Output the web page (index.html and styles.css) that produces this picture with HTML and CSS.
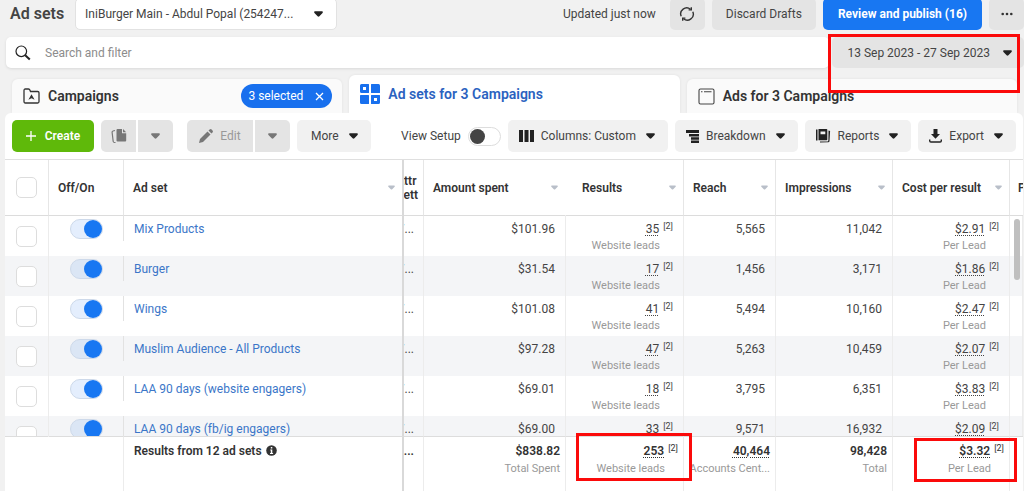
FILE: index.html
```html
<!DOCTYPE html>
<html lang="en">
<head>
<meta charset="utf-8">
<meta name="viewport" content="width=device-width, initial-scale=1">
<title>Ad sets</title>
<link rel="stylesheet" href="styles.css">
</head>
<body>
<svg class="symbols" aria-hidden="true">
  <symbol id="caret" viewBox="0 0 10 6"><path d="M1.3 0h7.4c1 0 1.5 1 .8 1.800L6 5.500c-.6.7-1.400.7-2 0L.5 1.800C-.2 1 .3 0 1.300 0z"/></symbol>
</svg>

<header class="topbar">
  <h1 class="title">Ad sets</h1>
  <div class="account">
    <select class="account-select" aria-label="Ad account"><option>IniBurger Main - Abdul Popal (254247...</option></select>
    <svg class="caret"><use href="#caret"/></svg>
  </div>
  <span class="updated">Updated just now</span>
  <button class="btn dark square" aria-label="Refresh">
    <svg width="16" height="16" viewBox="0 0 16 16" fill="none" stroke="#333" stroke-width="1.400"><path d="M2.200 10.200A6 6 0 0 1 11.500 3.200M13.800 5.800A6 6 0 0 1 4.500 12.800"/><path d="M12.300 1.200v2.700H9.600M3.700 14.800v-2.700h2.700"/></svg>
  </button>
  <button class="btn dark discard">Discard Drafts</button>
  <button class="btn primary">Review and publish (16)</button>
  <button class="btn dark square" aria-label="More options">
    <svg width="12" height="4" viewBox="0 0 12 4" fill="#333"><circle cx="1.700" cy="2" r="1.300"/><circle cx="6" cy="2" r="1.300"/><circle cx="10.300" cy="2" r="1.300"/></svg>
  </button>
</header>

<div class="filters">
  <label class="search">
    <svg width="16" height="16" viewBox="0 0 16 16" fill="none" stroke="#222"><circle cx="6.300" cy="6.300" r="5.300" stroke-width="1.200"/><path d="M10.200 10.200l4.600 4.300" stroke-width="2"/></svg>
    <input class="search-input" type="text" placeholder="Search and filter" aria-label="Search and filter">
  </label>
  <button class="btn dark date">13 Sep 2023 - 27 Sep 2023<svg class="caret"><use href="#caret"/></svg></button>
</div>

<nav class="tabs">
  <div class="tab">
    <svg width="17" height="16" viewBox="0 0 17 16" fill="none" stroke="#333" stroke-width="1.300"><path d="M1 13.500v-11C1 1.500 1.500 1 2.300 1h3.200c.8 0 1.200.4 1.500 1.200l.5 1.300h7.200c.9 0 1.300.5 1.300 1.300v8.700c0 .9-.4 1.500-1.300 1.500H2.300C1.500 15 1 14.400 1 13.500z"/><path d="M8.500 6.300l3.100 5.500-3.100-1.500-3.100 1.500z" fill="#333" stroke="none"/></svg>
    <a class="tab-link" href="#campaigns">Campaigns</a>
    <button class="pill" aria-label="3 selected, clear">3 selected
      <svg width="9" height="9" viewBox="0 0 9 9" stroke="#fff" stroke-width="1.300"><path d="M1 1l7 7M8 1L1 8"/></svg>
    </button>
  </div>
  <div class="tab active">
    <svg width="20" height="20" viewBox="0 0 20 20" fill="#1870ee"><path fill-rule="evenodd" d="M1.500 0H8.500Q9 0 9 .5V8.500Q9 9 8.500 9H1.500Q0 9 0 7.500V1.500Q0 0 1.500 0zM3 3V6H6V3z"/><path d="M11.500 0H18.500Q20 0 20 1.500V8.500Q20 9 19.500 9H11.500Q11 9 11 8.500V.5Q11 0 11.500 0z"/><path d="M.5 11H8.500Q9 11 9 11.500V19.500Q9 20 8.500 20H1.500Q0 20 0 18.500V11.500Q0 11 .5 11z"/><path fill-rule="evenodd" d="M11.500 11H19.500Q20 11 20 11.500V18.500Q20 20 18.500 20H11.500Q11 20 11 19.500V11.500Q11 11 11.500 11zM14 14V17H17V14z"/></svg>
    <a class="tab-link" href="#adsets" aria-current="page">Ad sets for 3 Campaigns</a>
  </div>
  <div class="tab">
    <svg width="17" height="17" viewBox="0 0 17 17" fill="none" stroke="#444" stroke-width="1.100"><rect x="1" y="1" width="15" height="15" rx="1.500"/><path d="M3 3.700h1.500M6 3.700h7.500"/></svg>
    <a class="tab-link" href="#ads">Ads for 3 Campaigns</a>
  </div>
</nav>

<main class="panel">
  <div class="toolbar">
    <button class="btn create"><svg width="10" height="10" viewBox="0 0 10 10" stroke="#fff" stroke-width="1.300"><path d="M5 0v10M0 5h10"/></svg>Create</button>
    <div class="split">
      <button class="btn off first" aria-label="Duplicate" disabled><svg width="16" height="15" viewBox="0 0 16 15" fill="#777"><path d="M6.500 0H11v4.200h4.200V11.500q0 1-1 1H6.500q-1 0-1-1V1q0-1 1-1z"/><path d="M12 0l3.200 3.300H12z"/><path d="M4 1.500L2 2Q1 2.300 1.100 3.300L2.200 12.500Q2.400 13.500 3.500 13.500H4.500" fill="none" stroke="#777" stroke-width="1.200"/></svg></button>
      <button class="btn off last" aria-label="Duplicate options" disabled><svg class="caret"><use href="#caret"/></svg></button>
    </div>
    <div class="split edit-group">
      <button class="btn off first edit" disabled><svg width="14" height="14" viewBox="0 0 14 14" fill="#777"><path d="M0 14l1-4L8.500 2.500l3 3L4 13z"/><path d="M9.500 1.600L10.600.5q1-.9 2 0l.9.9q.9 1 0 2L12.400 4.500z"/></svg>Edit</button>
      <button class="btn off last" aria-label="Edit options" disabled><svg class="caret"><use href="#caret"/></svg></button>
    </div>
    <button class="btn light more">More<svg class="caret"><use href="#caret"/></svg></button>
    <label class="setup">View Setup<input class="switch small" type="checkbox" role="switch"></label>
    <button class="btn light"><svg width="15" height="12" viewBox="0 0 15 12" fill="#222"><path d="M0 0h4v12H0zM5.500 0h4v12h-4zM11 0h4v12h-4z"/></svg>Columns: Custom<svg class="caret"><use href="#caret"/></svg></button>
    <button class="btn light"><svg width="13" height="13" viewBox="0 0 13 13" fill="#222"><path d="M0 0h13v3H0zM3 4h10v2.400H3zM5 7.300h8v2.400H5zM5 10.600h8V13H5z"/></svg>Breakdown<svg class="caret"><use href="#caret"/></svg></button>
    <button class="btn light"><svg width="15" height="14" viewBox="0 0 15 14" fill="#222"><path d="M0 .5h1.500v11H0z"/><path fill-rule="evenodd" d="M2.500 0h8q.8 0 .8.800V10.500q0 .8-.8.800h-8zM4.500 2.500v2.800h4.800V2.500z"/><path d="M12.500 1.500l1.600.5-.6 10q0 1.300-1.300 1.300L4 13.500v-1h7.200q1.200 0 1.200-1.500z"/></svg>Reports<svg class="caret"><use href="#caret"/></svg></button>
    <button class="btn light"><svg width="13" height="14" viewBox="0 0 13 14" fill="#222"><path d="M4.500 0h4v5H11L6.500 9.700 2 5h2.500z"/><path d="M.7 10.500v1.300q0 1.200 1.200 1.200h9.200q1.200 0 1.200-1.200v-1.300" fill="none" stroke="#222" stroke-width="1.400"/></svg>Export<svg class="caret"><use href="#caret"/></svg></button>
  </div>

  <div class="grid">
    <table class="table">
      <colgroup><col class="c-check"><col class="c-switch"><col><col class="c-attr"><col class="c-amount"><col class="c-results"><col class="c-reach"><col class="c-impr"><col class="c-cost"><col class="c-next"></colgroup>
      <thead>
        <tr>
          <th class="check"><input class="box" type="checkbox" aria-label="Select all"></th>
          <th>Off/On</th>
          <th class="pin"><div class="head">Ad set<svg class="caret"><use href="#caret"/></svg></div></th>
          <th class="attr"><div class="clip">Attr<br>Sett</div></th>
          <th class="plain"><div class="head">Amount spent<svg class="caret"><use href="#caret"/></svg></div></th>
          <th class="results"><div class="head">Results<svg class="caret"><use href="#caret"/></svg></div></th>
          <th><div class="head">Reach<svg class="caret"><use href="#caret"/></svg></div></th>
          <th><div class="head">Impressions<svg class="caret"><use href="#caret"/></svg></div></th>
          <th><div class="head">Cost per result<svg class="caret"><use href="#caret"/></svg></div></th>
          <th class="next">P</th>
        </tr>
      </thead>
      <tbody>
        <tr>
          <td class="check"><input class="box" type="checkbox" aria-label="Select Mix Products"></td>
          <td class="toggle"><input class="switch" type="checkbox" role="switch" aria-label="Mix Products on" checked></td>
          <td class="pin"><a class="name" href="#1">Mix Products</a></td>
          <td class="attr"><div class="clip">7...</div></td>
          <td>$101.96</td>
          <td><span class="ref">35</span><sup>[2]</sup><small>Website leads</small></td>
          <td>5,565</td><td>11,042</td>
          <td><span class="ref">$2.91</span><sup>[2]</sup><small>Per Lead</small></td><td></td>
        </tr>
        <tr>
          <td class="check"><input class="box" type="checkbox" aria-label="Select Burger"></td>
          <td class="toggle"><input class="switch" type="checkbox" role="switch" aria-label="Burger on" checked></td>
          <td class="pin"><a class="name" href="#2">Burger</a></td>
          <td class="attr"><div class="clip">7...</div></td>
          <td>$31.54</td>
          <td><span class="ref">17</span><sup>[2]</sup><small>Website leads</small></td>
          <td>1,456</td><td>3,171</td>
          <td><span class="ref">$1.86</span><sup>[2]</sup><small>Per Lead</small></td><td></td>
        </tr>
        <tr>
          <td class="check"><input class="box" type="checkbox" aria-label="Select Wings"></td>
          <td class="toggle"><input class="switch" type="checkbox" role="switch" aria-label="Wings on" checked></td>
          <td class="pin"><a class="name" href="#3">Wings</a></td>
          <td class="attr"><div class="clip">7...</div></td>
          <td>$101.08</td>
          <td><span class="ref">41</span><sup>[2]</sup><small>Website leads</small></td>
          <td>5,494</td><td>10,160</td>
          <td><span class="ref">$2.47</span><sup>[2]</sup><small>Per Lead</small></td><td></td>
        </tr>
        <tr>
          <td class="check"><input class="box" type="checkbox" aria-label="Select Muslim Audience - All Products"></td>
          <td class="toggle"><input class="switch" type="checkbox" role="switch" aria-label="Muslim Audience - All Products on" checked></td>
          <td class="pin"><a class="name" href="#4">Muslim Audience - All Products</a></td>
          <td class="attr"><div class="clip">7...</div></td>
          <td>$97.28</td>
          <td><span class="ref">47</span><sup>[2]</sup><small>Website leads</small></td>
          <td>5,263</td><td>10,459</td>
          <td><span class="ref">$2.07</span><sup>[2]</sup><small>Per Lead</small></td><td></td>
        </tr>
        <tr>
          <td class="check"><input class="box" type="checkbox" aria-label="Select LAA 90 days (website engagers)"></td>
          <td class="toggle"><input class="switch" type="checkbox" role="switch" aria-label="LAA 90 days (website engagers) on" checked></td>
          <td class="pin"><a class="name" href="#5">LAA 90 days (website engagers)</a></td>
          <td class="attr"><div class="clip">7...</div></td>
          <td>$69.01</td>
          <td><span class="ref">18</span><sup>[2]</sup><small>Website leads</small></td>
          <td>3,795</td><td>6,351</td>
          <td><span class="ref">$3.83</span><sup>[2]</sup><small>Per Lead</small></td><td></td>
        </tr>
        <tr>
          <td class="check"><input class="box" type="checkbox" aria-label="Select LAA 90 days (fb/ig engagers)"></td>
          <td class="toggle"><input class="switch" type="checkbox" role="switch" aria-label="LAA 90 days (fb/ig engagers) on" checked></td>
          <td class="pin"><a class="name" href="#6">LAA 90 days (fb/ig engagers)</a></td>
          <td class="attr"><div class="clip">7...</div></td>
          <td>$69.00</td>
          <td><span class="ref">33</span><sup>[2]</sup></td>
          <td>9,571</td><td>16,932</td>
          <td><span class="ref">$2.09</span><sup>[2]</sup></td><td></td>
        </tr>
      </tbody>
      <tfoot>
        <tr>
          <td class="plain"></td>
          <td></td>
          <td class="pin">Results from 12 ad sets <svg class="info" width="11" height="11" viewBox="0 0 11 11"><circle cx="5.500" cy="5.500" r="5.300" fill="#333"/><path d="M4.300 4.500h2v3.500h.8v1H4v-1h.8V5.500h-.5zM4.800 2h1.500v1.500H4.800z" fill="#fff"/></svg></td>
          <td class="attr"><div class="clip">...</div></td>
          <td>$838.82<small>Total Spent</small></td>
          <td><span class="ref">253</span><sup>[2]</sup><small>Website leads</small></td>
          <td><span class="ref">40,464</span><small class="wide">Accounts Cent...</small></td>
          <td>98,428<small>Total</small></td>
          <td><span class="ref">$3.32</span><sup>[2]</sup><small>Per Lead</small></td>
          <td></td>
        </tr>
      </tfoot>
    </table>
    <div class="thumb"></div>
  </div>
</main>

<div class="mark mark-date"></div>
<div class="mark mark-results"></div>
<div class="mark mark-cost"></div>
</body>
</html>
```

FILE: styles.css
```css
* { box-sizing: border-box; }

body {
  margin: 0;
  height: 100vh;
  display: flex;
  flex-direction: column;
  position: relative;
  overflow: hidden;
  background: #f1f1f1;
  color: #444;
  font: 12px/16px Roboto, "Liberation Sans", sans-serif;
}

button, input, select { font: inherit; color: inherit; margin: 0; }
a { color: inherit; text-decoration: none; }
svg { flex: none; }
.symbols { display: none; }
.caret { width: 9px; height: 6px; fill: #222; }

.btn {
  height: 32px;
  border: 0;
  border-radius: 5px;
  padding: 0 12px;
  display: flex;
  align-items: center;
  justify-content: center;
  gap: 7px;
  white-space: nowrap;
}
.dark { background: #e4e4e4; }
.light { background: #f1f1f1; padding: 0 13px 0 11px; }
.more { padding-left: 14px; }
.light .caret { margin-left: 3px; }
.primary { background: #1877f2; color: #fff; font-weight: 700; padding: 0 15px; }
.square { width: 35px; padding: 0; }

.topbar {
  margin-top: -2px;
  padding-left: 10px;
  display: flex;
  align-items: center;
  gap: 7px;
}
.title { margin: 0 4px 0 0; font-size: 16px; font-weight: 600; color: #444; }
.account {
  display: flex;
  align-items: center;
  width: 262px;
  height: 32px;
  padding-right: 13px;
  background: #fff;
  border: 1px solid #e2e2e2;
  border-radius: 5px;
}
.account-select { flex: 1; min-width: 0; height: 30px; border: 0; padding: 0 9px; appearance: none; background: transparent; }
.updated { margin-left: auto; margin-right: 7px; }
.discard { padding: 0 14px; }

.filters { display: flex; gap: 3px; margin-top: 7px; padding-left: 6px; }
.search {
  flex: 1;
  display: flex;
  align-items: center;
  gap: 14px;
  height: 31px;
  padding: 0 9px;
  background: #fff;
  border-radius: 5px;
  box-shadow: 0 1px 3px rgba(0, 0, 0, .1);
}
.search-input { flex: 1; border: 0; padding: 0; background: transparent; outline: 0; }
.search-input::placeholder { color: #8c8c8c; opacity: 1; }
.date { height: 31px; gap: 13px; padding: 0 12px 0 15px; }

.tabs { display: flex; align-items: flex-end; gap: 7px; margin-top: 7px; padding: 0 7px 0 12px; }
.tab {
  flex: 1;
  height: 34px;
  display: flex;
  align-items: center;
  gap: 8px;
  padding: 0 10px 0 11px;
  background: #fafafa;
  border-radius: 6px 6px 0 0;
  box-shadow: 0 0 3px rgba(0, 0, 0, .07);
  color: #333;
}
.tab-link { font-size: 14px; font-weight: 600; }
.active { height: 38px; background: #fff; color: #2b62c0; }
.pill {
  margin-left: auto;
  height: 24px;
  display: flex;
  align-items: center;
  gap: 12px;
  padding: 0 8px 0 7px;
  border: 0;
  border-radius: 12px;
  background: #1870ee;
  color: #fff;
}

.panel {
  flex: 1;
  min-height: 0;
  display: flex;
  flex-direction: column;
  margin: 0 1px 0 5px;
  background: #fff;
  border-radius: 6px 6px 0 0;
  position: relative;
}
.toolbar { display: flex; align-items: center; gap: 7px; padding: 7px; }
.create { background: #5fb90a; color: #fff; font-weight: 600; gap: 9px; width: 82px; }
.split { display: flex; gap: 2px; }
.edit-group { margin-left: 7px; }
.off { background: #e4e4e4; color: #999; width: 35px; padding: 0; }
.off .caret { fill: #777; }
.first { border-radius: 5px 0 0 5px; }
.last { border-radius: 0 5px 5px 0; }
.edit { width: 66px; }
.setup { display: flex; align-items: center; gap: 7px; margin-left: auto; white-space: nowrap; }

.switch {
  appearance: none;
  display: block;
  width: 33px;
  height: 20px;
  border: 1px solid #cdd9ea;
  border-radius: 10px;
  background: #e4eefd;
}
.switch::before {
  content: "";
  display: block;
  width: 18px;
  height: 18px;
  border-radius: 9px;
  background: #1877f2;
}
.switch:checked::before { margin-left: auto; }
.small { height: 19px; background: #fff; border-color: #ddd; padding: 1px; }
.small::before { width: 15px; height: 15px; background: #444; }

.box {
  appearance: none;
  display: block;
  width: 21px;
  height: 21px;
  margin: 0 auto;
  border: 1px solid #ddd;
  border-radius: 5px;
  background: #fff;
}

.grid { flex: 1; min-height: 0; overflow: hidden; position: relative; border-top: 1px solid #dfdfdf; }
.table { width: 100%; table-layout: fixed; border-collapse: separate; border-spacing: 0; }
.c-check { width: 44px; }
.c-switch { width: 75px; }
.c-attr { width: 20px; }
.c-amount { width: 142px; }
.c-results { width: 118px; }
.c-reach { width: 92px; }
.c-impr { width: 117px; }
.c-cost { width: 117px; }
.c-next { width: 13px; }

th {
  position: sticky;
  top: 0;
  z-index: 2;
  height: 56px;
  padding: 0 7px 0 9px;
  background: #fff;
  border-right: 1px solid #e6e6e6;
  border-bottom: 1px solid #dcdcdc;
  color: #333;
  font-weight: 600;
  text-align: left;
  white-space: nowrap;
}
.head { display: flex; align-items: center; justify-content: space-between; }
.head .caret { width: 7px; height: 5px; fill: #b9bfc9; }
th.results { padding-left: 16px; }
.plain { border-right-color: transparent; }
th.next { padding: 0 0 0 8px; border-right: 0; overflow: hidden; }

td {
  height: 40px;
  padding: 5px 10px 2px 0;
  vertical-align: top;
  text-align: right;
  white-space: nowrap;
  border-right: 1px solid #ececec;
}
tbody tr:nth-child(even) { background: #f4f5f7; }
tbody tr:nth-child(even) .switch { background: #dbe6f5; }
.check, td.check { padding: 0; vertical-align: middle; }
td.toggle {
  padding: 3px 0 0 21px;
  border-right: 0;
  background: linear-gradient(#e2e2e2, #e2e2e2) right top / 1px 25px no-repeat;
}
td.pin { padding-left: 10px; text-align: left; }
.name { color: #3b76c8; }
.pin { border-right: 2px solid #d9d9d9; }
th.attr { padding: 0; }
td.attr { padding-right: 0; }
.clip { display: flex; justify-content: flex-end; overflow: hidden; padding-right: 5px; line-height: 14px; }
td .clip { padding-right: 9px; line-height: 16px; }
.ref { text-decoration: underline dotted 1px; text-underline-offset: 2px; }
sup { display: inline-block; margin-left: 4px; font-size: 9px; line-height: 9px; vertical-align: 4px; }
small { display: block; margin-top: 1px; font-size: 11px; line-height: 16px; color: #999; font-weight: 400; }
sup + small { margin-right: 13px; }
.wide { display: flex; justify-content: flex-end; }

tfoot td {
  position: sticky;
  bottom: 0;
  z-index: 2;
  height: 55px;
  padding: 6px 5px 0 0;
  background: #fff;
  border-top: 1px solid #ddd;
  color: #333;
  font-weight: 600;
}
tfoot td:last-child { border-right: 0; }
tfoot sup { font-weight: 400; }
tfoot small { margin-top: 2px; }
.info { vertical-align: -1px; margin-left: 1px; }

.thumb {
  position: absolute;
  z-index: 3;
  top: 59px;
  right: 3px;
  width: 6px;
  height: 61px;
  border-radius: 3px;
  background: #bfbfbf;
}

.mark { position: absolute; z-index: 5; border: 3px solid #fb0a0a; pointer-events: none; }
.mark-date { top: 34px; right: 4px; width: 192px; height: 59px; }
.mark-results { bottom: 10px; right: 332px; width: 116px; height: 48px; }
.mark-cost { bottom: 9px; right: 7px; width: 103px; height: 44px; }
```
